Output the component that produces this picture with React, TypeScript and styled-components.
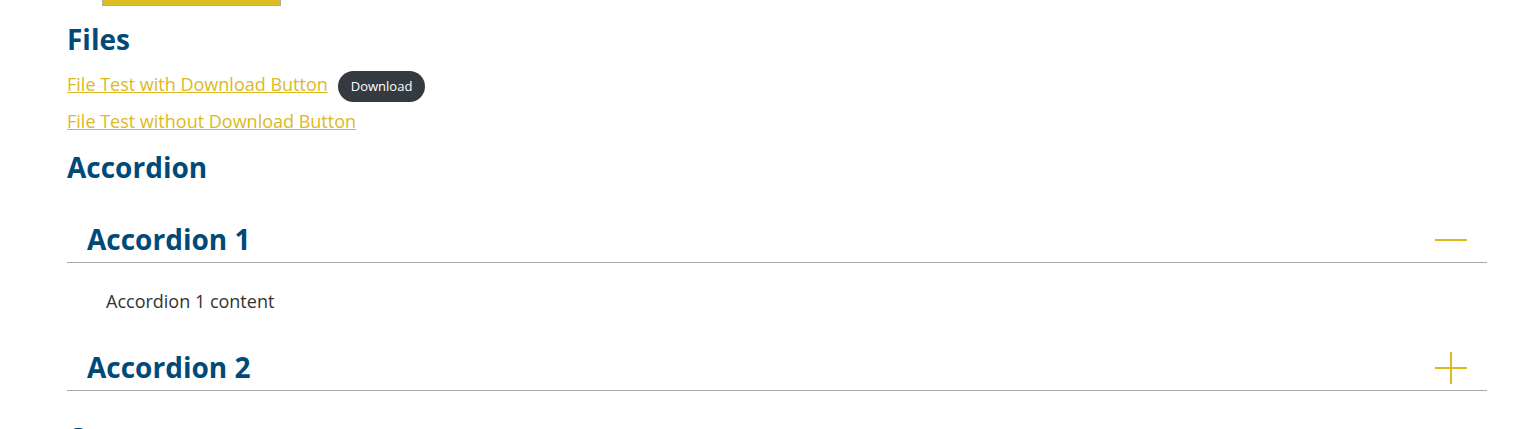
import { useState } from "react";
import styled, { createGlobalStyle } from "styled-components";

const GlobalStyle = createGlobalStyle`
  body {
    margin: 0;
    background: #fff;
    font-family: "Open Sans", "Liberation Sans", sans-serif;
    color: #333;
  }
`;

const Page = styled.main`
  width: 1420px;
  padding-left: 67px;
`;

const TopSwatch = styled.div`
  margin-left: 35px;
  width: 177px;
  height: 5px;
  background: #dcbe22;
  border: 1px solid #aaa;
  border-top: none;
`;

const SectionTitle = styled.h2<{ $gap: number }>`
  margin: ${(p) => p.$gap}px 0 0;
  font-size: 28px;
  line-height: 34px;
  font-weight: 700;
  color: #004a7a;
`;

const FileRow = styled.div<{ $gap: number }>`
  display: flex;
  align-items: baseline;
  gap: 10px;
  margin-top: ${(p) => p.$gap}px;
`;

const FileLink = styled.a`
  font-size: 18px;
  line-height: 27px;
  color: #dcb923;
  text-decoration: underline;
  cursor: pointer;
`;

const DownloadButton = styled.button`
  font-family: inherit;
  font-size: 13px;
  line-height: 17px;
  padding: 7px 13px;
  border: none;
  border-radius: 16px;
  background: #343a40;
  color: #fff;
  cursor: pointer;
`;

const AccordionList = styled.div`
  margin-top: 38px;
`;

const AccordionItem = styled.section<{ $gap: number }>`
  margin-top: ${(p) => p.$gap}px;
`;

const AccordionHeader = styled.button`
  display: flex;
  align-items: center;
  justify-content: space-between;
  width: 100%;
  padding: 0 20px 6px;
  background: none;
  border: none;
  border-bottom: 1px solid #aaa;
  font-family: inherit;
  cursor: pointer;
  text-align: left;
`;

const AccordionTitle = styled.span`
  font-size: 28px;
  line-height: 34px;
  font-weight: 700;
  color: #004a7a;
`;

const ToggleIcon = styled.svg`
  width: 32px;
  height: 32px;
  flex-shrink: 0;
  margin-top: 2px;
`;

const AccordionBody = styled.div`
  padding: 25px 39px 0;
  font-size: 18px;
  line-height: 27px;
  color: #333;
`;

function Toggle({ open }: { open: boolean }) {
    return (
        <ToggleIcon viewBox="0 0 32 32">
            <rect x="0" y="15" width="32" height="2" fill="#dcbb1f" />
            {!open && <rect x="15" y="0" width="2" height="32" fill="#dcbb1f" />}
        </ToggleIcon>
    );
}

const items = [
    { title: "Accordion 1", content: "Accordion 1 content" },
    { title: "Accordion 2", content: "Accordion 2 content" },
];

export default function App() {
    const [open, setOpen] = useState<number | null>(0);

    return (
        <>
            <GlobalStyle />
            <Page>
                <TopSwatch />
                <SectionTitle $gap={16}>Files</SectionTitle>
                <FileRow $gap={15}>
                    <FileLink>File Test with Download Button</FileLink>
                    <DownloadButton>Download</DownloadButton>
                </FileRow>
                <FileRow $gap={6}>
                    <FileLink>File Test without Download Button</FileLink>
                </FileRow>
                <SectionTitle $gap={15}>Accordion</SectionTitle>

                <AccordionList>
                    {items.map((item, i) => (
                        <AccordionItem key={item.title} $gap={i === 0 ? 0 : 35}>
                            <AccordionHeader onClick={() => setOpen(open === i ? null : i)}>
                                <AccordionTitle>{item.title}</AccordionTitle>
                                <Toggle open={open === i} />
                            </AccordionHeader>
                            {open === i && <AccordionBody>{item.content}</AccordionBody>}
                        </AccordionItem>
                    ))}
                </AccordionList>

                <SectionTitle $gap={30}>Quote</SectionTitle>
            </Page>
        </>
    );
}
